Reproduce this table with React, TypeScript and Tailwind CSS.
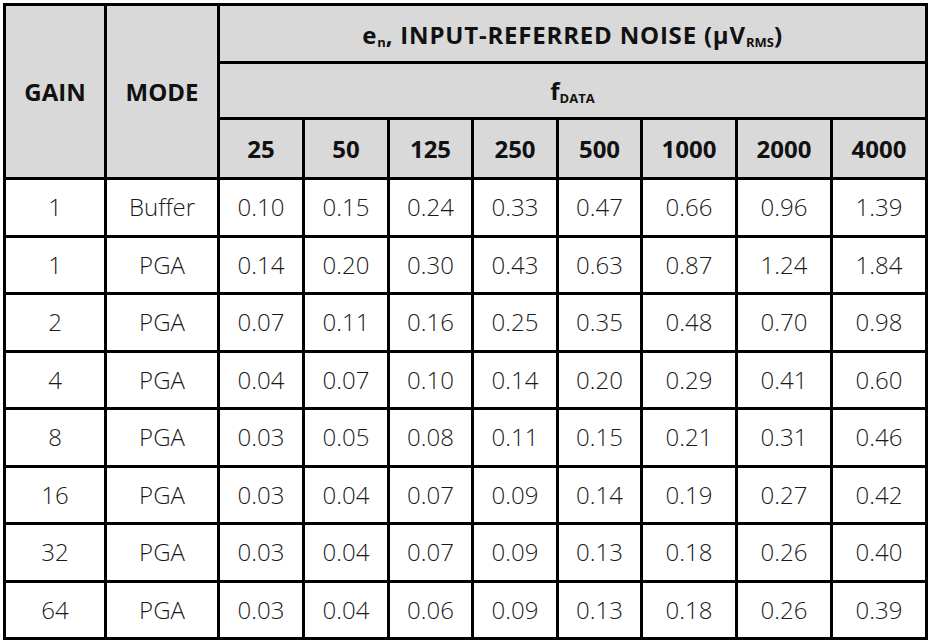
const freqs = ["25", "50", "125", "250", "500", "1000", "2000", "4000"];

const rows: { gain: string; mode: string; values: string[] }[] = [
  { gain: "1", mode: "Buffer", values: ["0.10", "0.15", "0.24", "0.33", "0.47", "0.66", "0.96", "1.39"] },
  { gain: "1", mode: "PGA", values: ["0.14", "0.20", "0.30", "0.43", "0.63", "0.87", "1.24", "1.84"] },
  { gain: "2", mode: "PGA", values: ["0.07", "0.11", "0.16", "0.25", "0.35", "0.48", "0.70", "0.98"] },
  { gain: "4", mode: "PGA", values: ["0.04", "0.07", "0.10", "0.14", "0.20", "0.29", "0.41", "0.60"] },
  { gain: "8", mode: "PGA", values: ["0.03", "0.05", "0.08", "0.11", "0.15", "0.21", "0.31", "0.46"] },
  { gain: "16", mode: "PGA", values: ["0.03", "0.04", "0.07", "0.09", "0.14", "0.19", "0.27", "0.42"] },
  { gain: "32", mode: "PGA", values: ["0.03", "0.04", "0.07", "0.09", "0.13", "0.18", "0.26", "0.40"] },
  { gain: "64", mode: "PGA", values: ["0.03", "0.04", "0.06", "0.09", "0.13", "0.18", "0.26", "0.39"] },
];

const head = "bg-[#d9d9d9] flex items-center justify-center font-bold text-[#111]";
const cell = "bg-white flex items-center justify-center font-light text-[#1a1a1a]";
const sub = "text-[13px] align-baseline relative top-[3px] tracking-normal";

export default function App() {
  return (
    <div className="bg-white min-h-screen pt-[3px] pl-[3px] font-['Open_Sans',sans-serif] text-[24px] leading-none">
      <div className="grid w-fit gap-[3px] bg-black p-[3px] grid-cols-[98px_110px_82px_82px_81px_82px_81px_92px_92px_92px] grid-rows-[55px_53px_57px_repeat(8,54.5px)]">
        <div className={`${head} row-span-3`}>GAIN</div>
        <div className={`${head} row-span-3`}>MODE</div>
        <div className={`${head} col-span-8 pt-[3px]`}>
          <span className="tracking-[0.8px]">
            e<sub className={sub}>n</sub>, INPUT-REFERRED NOISE (µV<sub className={sub}>RMS</sub>)
          </span>
        </div>
        <div className={`${head} col-span-8`}>
          <span>
            f<sub className={sub}>DATA</sub>
          </span>
        </div>
        {freqs.map((f) => (
          <div key={f} className={head}>
            {f}
          </div>
        ))}
        {rows.map((r, i) => (
          <div key={i} className="contents">
            <div className={cell}>{r.gain}</div>
            <div className={cell}>{r.mode}</div>
            {r.values.map((v, j) => (
              <div key={j} className={cell}>
                {v}
              </div>
            ))}
          </div>
        ))}
      </div>
    </div>
  );
}
